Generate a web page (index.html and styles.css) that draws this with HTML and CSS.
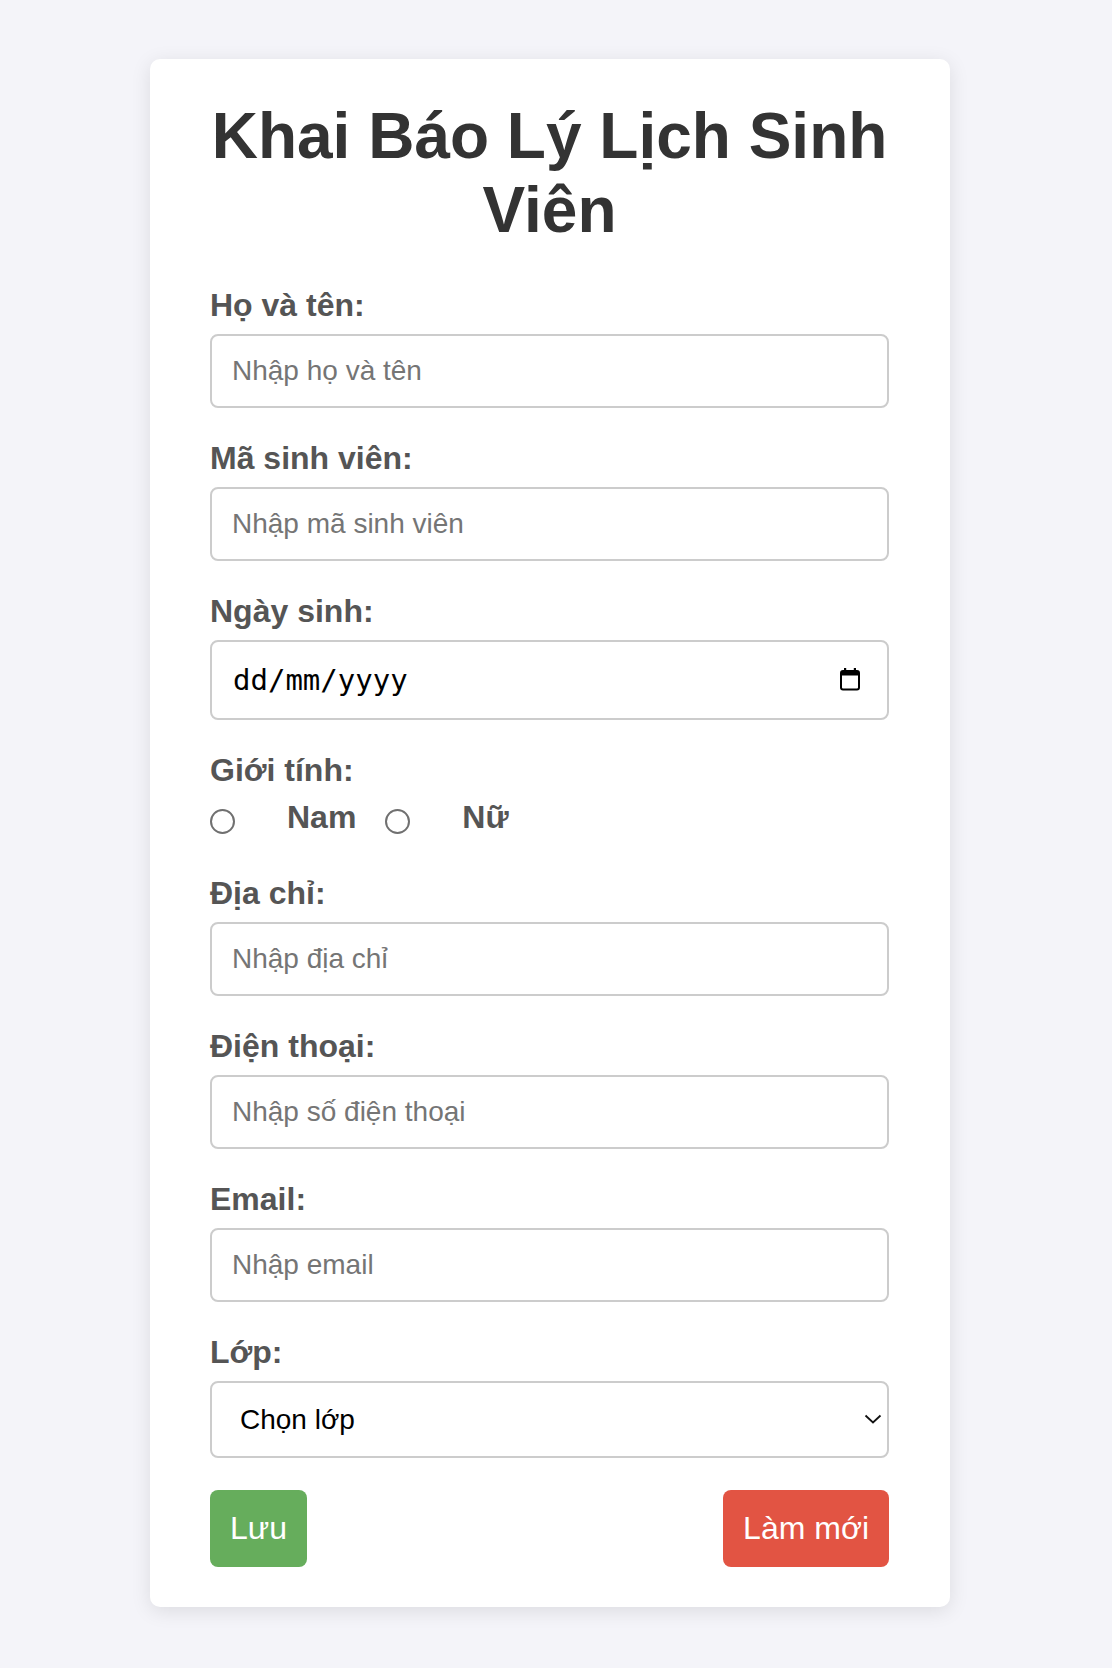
FILE: index.html
```html
<!DOCTYPE html>
<html lang="vi">
<head>
<meta charset="utf-8">
<title>Khai Báo Lý Lịch Sinh Viên</title>
<link rel="stylesheet" href="styles.css">
</head>
<body>
<div class="card">
  <h1 class="title">Khai Báo Lý Lịch Sinh Viên</h1>
  <form class="form">
    <div class="group">
      <label class="label" for="name">Họ và tên:</label>
      <input class="field" id="name" type="text" placeholder="Nhập họ và tên">
    </div>
    <div class="group">
      <label class="label" for="msv">Mã sinh viên:</label>
      <input class="field" id="msv" type="text" placeholder="Nhập mã sinh viên">
    </div>
    <div class="group">
      <label class="label" for="dob">Ngày sinh:</label>
      <div class="date-wrap">
        <input class="field date" id="dob" type="text" placeholder="dd/mm/yyyy">
        <svg class="cal" width="22" height="24" viewBox="0 0 22 24" aria-hidden="true">
          <rect x="2" y="4" width="18" height="18.5" rx="2" fill="none" stroke="#000" stroke-width="2"/>
          <rect x="2" y="4" width="18" height="4.5" fill="#000"/>
          <rect x="5" y="1" width="2.2" height="4" fill="#000"/>
          <rect x="14.8" y="1" width="2.2" height="4" fill="#000"/>
        </svg>
      </div>
    </div>
    <div class="group">
      <span class="label">Giới tính:</span>
      <div class="radios">
        <input class="radio" type="radio" name="gt" id="nam">
        <label class="label radio-label gap" for="nam">Nam</label>
        <input class="radio" type="radio" name="gt" id="nu">
        <label class="label radio-label" for="nu">Nữ</label>
      </div>
    </div>
    <div class="group">
      <label class="label" for="dc">Địa chỉ:</label>
      <input class="field" id="dc" type="text" placeholder="Nhập địa chỉ">
    </div>
    <div class="group">
      <label class="label" for="dt">Điện thoại:</label>
      <input class="field" id="dt" type="text" placeholder="Nhập số điện thoại">
    </div>
    <div class="group">
      <label class="label" for="em">Email:</label>
      <input class="field" id="em" type="text" placeholder="Nhập email">
    </div>
    <div class="group">
      <label class="label" for="lop">Lớp:</label>
      <div class="select-wrap">
        <select class="select" id="lop">
          <option>Chọn lớp</option>
        </select>
        <svg class="chev" width="18" height="10" viewBox="0 0 18 10" aria-hidden="true">
          <path d="M1.5 1.5 L9 8.5 L16.5 1.5" fill="none" stroke="#111" stroke-width="1.8"/>
        </svg>
      </div>
    </div>
    <div class="actions">
      <button class="btn btn-save" type="button">Lưu</button>
      <button class="btn btn-reset" type="button">Làm mới</button>
    </div>
  </form>
</div>
</body>
</html>
```

FILE: styles.css
```css
html, body {
  margin: 0;
  padding: 0;
}
body {
  background: #f4f4f9;
  font-family: "Liberation Sans", Arial, sans-serif;
  padding: 59px 12px 61px 0;
}
.card {
  width: 800px;
  box-sizing: border-box;
  margin: 0 auto;
  background: #fff;
  border-radius: 10px;
  box-shadow: 0 4px 20px rgba(0, 0, 0, 0.1);
  padding: 40px 61px 40px 60px;
}
.title {
  margin: 0 0 40px;
  text-align: center;
  font-size: 64px;
  font-weight: bold;
  color: #333;
  line-height: normal;
}
.form {
  display: flex;
  flex-direction: column;
}
.group {
  display: flex;
  flex-direction: column;
  margin-bottom: 32px;
}
.label {
  display: block;
  font-size: 32px;
  font-weight: bold;
  color: #555;
  margin-bottom: 10px;
  line-height: normal;
}
.field {
  box-sizing: border-box;
  width: 100%;
  height: 74px;
  border: 2px solid #ccc;
  border-radius: 8px;
  padding: 0 20px;
  font-family: "Liberation Sans", Arial, sans-serif;
  font-size: 28px;
  color: #000;
  background: #fff;
  outline: none;
}
.field::placeholder {
  color: #757575;
}
.date-wrap, .select-wrap {
  position: relative;
}
.field.date {
  height: 80px;
  font-family: "DejaVu Sans Mono", monospace;
  font-size: 29px;
  padding-left: 21px;
}
.field.date::placeholder {
  color: #000;
}
.cal {
  position: absolute;
  right: 28px;
  top: 27px;
}
.radios {
  display: flex;
  align-items: flex-start;
  height: 44px;
}
.radio {
  appearance: none;
  -webkit-appearance: none;
  box-sizing: border-box;
  width: 25px;
  height: 25px;
  margin: 10px 52px 0 0;
  border: 2px solid #707070;
  border-radius: 50%;
  background: #fff;
  flex: none;
}
.radio-label {
  margin-bottom: 0;
}
.radio-label.gap {
  margin-right: 29px;
}
.select {
  appearance: none;
  -webkit-appearance: none;
  box-sizing: border-box;
  width: 100%;
  height: 77px;
  border: 2px solid #ccc;
  border-radius: 8px;
  padding: 0 40px 0 28px;
  font-family: "Liberation Sans", Arial, sans-serif;
  font-size: 28px;
  color: #000;
  background: #fff;
}
.chev {
  position: absolute;
  right: 7px;
  top: 33px;
  pointer-events: none;
}
.actions {
  display: flex;
  justify-content: space-between;
  margin-top: 0;
}
.btn {
  border: none;
  border-radius: 8px;
  padding: 0 20px;
  height: 77px;
  font-family: "Liberation Sans", Arial, sans-serif;
  font-size: 32px;
  color: #fff;
  cursor: pointer;
}
.btn-save {
  background: #66ad5c;
}
.btn-reset {
  background: #e25443;
}
```
